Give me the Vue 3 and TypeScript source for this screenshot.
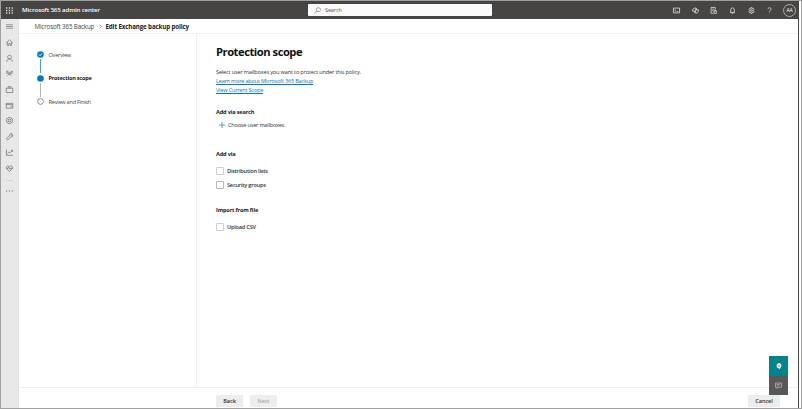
<script setup lang="ts">
interface Icon { name: string; d: string }

const headerIcons: Icon[] = [
  { name: 'Shell', d: 'M1 2.500h14v11H1zM4 6l2.500 2L4 10M8 10.500h4' },
  { name: 'Copilot', d: 'M5 2.500h4.500l1.500 4h3.500v4l-2 3H7l-2-4H1.500v-4zM9.500 3L6.500 13M5 9.500h3M9 6.500h3' },
  { name: 'Notes', d: 'M12 6V1H2.500v13.500h5M5 5h4.500M5 8h2.500M9 9h5.500v5.500H9zM10.500 9V7.500h2.500V9' },
  { name: 'Notifications', d: 'M4 11.500V6a4 4 0 0 1 8 0v5.500l1.500 1h-11zM6.500 13.500a1.500 1.500 0 0 0 3 0' },
  { name: 'Settings', d: 'M6.500 1.500h3l.5 2 2-.5 1.700 2.500-1.400 1.500v2l1.400 1.500-1.700 2.500-2-.5-.5 2h-3l-.5-2-2 .5-1.700-2.500L3.700 9V7L2.300 5.500 4 3l2 .5zM8 5.500a2.500 2.500 0 1 0 .1 0M8 7.500v1' },
  { name: 'Help', d: 'M4.500 5a3.500 3.500 0 1 1 5.500 3C8.300 9 8 9.500 8 11M8 13v1.500' },
]

const navIcons: Icon[] = [
  { name: 'Menu', d: 'M0 4h16M0 8h16M0 12h16' },
  { name: 'Home', d: 'M1 8.500L8 2l7 6.500M3 7v7.500h3.500v-4.500h3v4.500H13V7' },
  { name: 'Users', d: 'M8 .5a4.300 4.300 0 1 0 .1 0M1.500 15.500c.3-4 2.500-6.500 6.500-6.500s6.200 2.500 6.500 6.500' },
  { name: 'Teams', d: 'M3 2.500a1.500 1.500 0 1 0 .1 0M13 2.500a1.500 1.500 0 1 0 .1 0M8 5a2 2 0 1 0 .1 0M0 8.500c1-2.500 4-2.500 5.500 0M10.500 8.500c1-2.500 4-2.500 5.500 0M4 13.500c.5-5 7.500-5 8 0' },
  { name: 'Resources', d: 'M.5 5h15v10H.500zM5 5V1.500h6V5' },
  { name: 'Billing', d: 'M.5 3h15v11H.500zM.500 6h15M10.500 10.500h3' },
  { name: 'Support', d: 'M8 .800a7.200 7.200 0 1 0 .1 0M8 5a3 3 0 1 0 .1 0M3 3l3 3M10 6l3-3M3 13l3-3M10 10l3 3' },
  { name: 'Settings', d: 'M1.500 12l7.500-7c-.5-3 2-5 5-3.500l-2.500 2.500 1 1.500 3-1c.5 3.500-2 5-4.500 4.500L4 15.500c-2 0-3.500-1.500-2.500-3.500z' },
  { name: 'Reports', d: 'M1 1.500V14.500h14.500M3.500 11l4-4.500 2 2L15 3.500M11.500 3H15v3.500' },
  { name: 'Health', d: 'M8 15L1.500 8.500C-1.500 4 5-1 8 4c3-5 9.500 0 6.500 4.500zM1 7.500H5L6.500 5 9 10l1.500-2.500H15' },
]
</script>

<template>
  <div class="window">
    <div class="shell">
      <header class="top">
        <svg class="waffle" viewBox="0 0 7 7"><path d="M0 1h7M0 3.500h7M0 6h7" /></svg>
        <span class="brand">Microsoft 365 admin center</span>
        <div class="search">
          <svg viewBox="0 0 16 16"><path d="M10 1.500a4.500 4.500 0 1 0 .1 0M6.500 9L1 14.500" /></svg>
          <span>Search</span>
        </div>
        <div class="tools">
          <svg v-for="i in headerIcons" :key="i.name" viewBox="0 0 16 16"><path :d="i.d" /></svg>
        </div>
        <div class="avatar">AA</div>
      </header>
      <div class="lower">
        <nav class="side">
          <div v-for="i in navIcons" :key="i.name" class="nav-item">
            <svg viewBox="0 0 16 16"><path :d="i.d" /></svg>
          </div>
          <div class="rule"></div>
          <svg class="more" viewBox="0 0 7 2"><path d="M0 1h1.200M2.900 1h1.200M5.800 1H7" /></svg>
        </nav>
        <div class="page">
          <div class="crumbs">
            <span class="crumb">Microsoft 365 Backup</span>
            <svg viewBox="0 0 4 6"><path d="M.7.500L3.200 3 .7 5.500" /></svg>
            <b class="current">Edit Exchange backup policy</b>
          </div>
          <div class="middle">
            <aside class="steps">
              <div class="step">
                <svg viewBox="0 0 7 7"><circle cx="3.500" cy="3.500" r="3.300" class="fill" /><path class="tick" d="M1.900 3.500L3 4.700l2.200-2.300" /></svg>
                <span>Overview</span>
              </div>
              <div class="line done"></div>
              <div class="step">
                <svg viewBox="0 0 7 7"><circle cx="3.500" cy="3.500" r="3.300" class="fill" /></svg>
                <b>Protection scope</b>
              </div>
              <div class="line"></div>
              <div class="step">
                <svg viewBox="0 0 7 7"><circle cx="3.500" cy="3.500" r="2.900" class="ring" /></svg>
                <span>Review and Finish</span>
              </div>
            </aside>
            <main class="content">
              <h1>Protection scope</h1>
              <p class="intro">Select user mailboxes you want to protect under this policy.</p>
              <a class="learn">Learn more about Microsoft 365 Backup</a>
              <a class="view">View Current Scope</a>
              <h2 class="h-search">Add via search</h2>
              <div class="choose">
                <svg viewBox="0 0 7 7"><path d="M3.500 0v7M0 3.500h7" /></svg>
                <span>Choose user mailboxes</span>
              </div>
              <h2 class="h-add">Add via</h2>
              <label class="opt first"><i></i><span>Distribution lists</span></label>
              <label class="opt second"><i></i><span>Security groups</span></label>
              <h2 class="h-import">Import from file</h2>
              <label class="opt third"><i></i><span>Upload CSV</span></label>
            </main>
          </div>
          <footer>
            <button class="back">Back</button>
            <button class="next">Next</button>
            <button class="cancel">Cancel</button>
          </footer>
        </div>
      </div>
    </div>
    <div class="float">
      <div class="help">
        <svg viewBox="0 0 8 10"><path d="M2 7.500C-.8 4.500 1 .5 4 .5s5 3.500 2 6.500L4.500 9.800V7.500z" /><path class="hole" d="M4 2.300v3" /></svg>
      </div>
      <div class="feedback">
        <svg viewBox="0 0 16 16"><path d="M1 2.500h14v9.500H8l-3 3v-3H1zM4 6h8M4 8.800h5" /></svg>
      </div>
    </div>
  </div>
</template>

<style>
body { margin: 0; overflow: hidden; }
</style>

<style scoped>
* { box-sizing: border-box; }
.window {
  position: relative; width: 802px; height: 409px; padding-right: 2px;
  border: 1px solid #a0a0a0; background: #fff; color: #333;
  font: 5.600px/8px "Open Sans", "Noto Sans", sans-serif; letter-spacing: -.17px; white-space: nowrap;
}
.shell { height: 407px; border-right: 1px solid #484644; display: flex; flex-direction: column; }
svg { display: block; flex: none; fill: none; stroke: currentColor; overflow: visible; }
.top { height: 18px; flex: none; background: #464543; color: #fff; display: flex; align-items: center; }
.waffle { width: 7px; height: 7px; margin-left: 5px; stroke-width: 1.300; stroke-dasharray: 1.300 1.500; color: #ddd; }
.brand { margin-left: 9px; width: 285.500px; font-size: 6.100px; font-weight: 600; letter-spacing: -.11px; }
.search { width: 184px; height: 12px; border-radius: 1px; background: #fafafa; color: #555; display: flex; align-items: center; padding-left: 6.500px; }
.search svg { width: 7px; height: 7px; stroke-width: 1.400; margin-right: 4px; }
.tools { display: flex; gap: 11.700px; margin-left: 181.500px; color: #e0e0e0; }
.tools svg { width: 7px; height: 7px; stroke-width: 1.800; }
.avatar { width: 13px; height: 13px; margin-left: 9.500px; border: 1px solid #aaa; border-radius: 50%; font-size: 5px; line-height: 11px; letter-spacing: -.1px; text-align: center; }
.lower { flex: 1; min-height: 0; display: flex; }
.side { width: 18px; flex: none; background: #e8e8e8; color: #6a6a6a; display: flex; flex-direction: column; align-items: center; border-right: 1px solid #e2e2e2; }
.nav-item { height: 15.700px; width: 17px; display: flex; align-items: center; justify-content: center; }
.nav-item svg { width: 7px; height: 7px; stroke-width: 1.600; }
.nav-item:first-child svg { stroke-width: 1.500; }
.rule { height: 1px; width: 6px; margin-top: 4px; background: #d0d0d0; }
.more { width: 7px; height: 2px; margin-top: 9px; stroke-width: 1; }
.page { flex: 1; min-width: 0; display: flex; flex-direction: column; }
.crumbs { height: 15px; flex: none; display: flex; align-items: center; padding: 1px 0 0 15.500px; border-bottom: 1px solid #f1f1f1; font-size: 6.200px; letter-spacing: -.13px; color: #444; }
.crumbs svg { width: 3px; height: 5px; stroke-width: .8; margin: 0 4px; }
.current { font-weight: 700; color: #222; }
.crumb { width: 60px; }
.middle { flex: 1; min-height: 0; display: flex; }
.steps { width: 178px; padding: 17px 0 0 18px; border-right: 1px solid #f0f0f0; }
.step { height: 7px; display: flex; align-items: center; gap: 4.500px; color: #444; letter-spacing: -.23px; }
.step b { color: #222; }
.step svg { width: 7px; height: 7px; }
.fill { fill: #0078d4; stroke: none; }
.tick { stroke: #fff; stroke-width: .9; }
.ring { stroke: #777; stroke-width: .8; }
.line { width: 1px; height: 14px; margin: 1px 0 1.500px 3px; background: #b5b5b5; }
.line.done { background: #4a9fe0; }
.content { display: flex; flex-direction: column; align-items: flex-start; padding: 10px 0 0 19px; }
h1, h2, p { margin: 0; }
h1 { height: 15px; font-size: 11.200px; line-height: 15px; font-weight: 700; letter-spacing: -.47px; color: #111; }
.intro { margin-top: 9px; height: 9px; line-height: 9px; }
a { height: 9px; line-height: 9px; color: #0078d4; letter-spacing: -.21px; text-decoration: underline; text-decoration-thickness: .5px; text-underline-offset: .5px; }
h2 { font-size: 5.600px; line-height: 8px; height: 8px; font-weight: 700; color: #222; }
.h-search { margin-top: 13px; }
.choose { display: flex; align-items: center; margin: 5px 0 0 3px; height: 8px; gap: 3px; letter-spacing: -.21px; }
.choose svg { width: 6px; height: 6px; color: #2086d7; stroke-width: .9; }
.h-add { margin-top: 21px; }
.opt { display: flex; align-items: center; height: 8px; gap: 3px; font-weight: 600; color: #333; letter-spacing: -.21px; }
.opt i { width: 8px; height: 8px; border: 1px solid #cecece; border-radius: 1px; }
.second i { border-color: #b8b8b8; }
.first { margin-top: 9px; }
.second { margin-top: 6px; }
.h-import { margin-top: 17px; }
.third { margin-top: 9px; }
footer { height: 21px; flex: none; display: flex; align-items: flex-start; padding: 7px 18px 0 197px; border-top: 1px solid #eee; }
button { width: 27px; height: 12px; margin: 0; padding: 0; border: 0; background: #ededed; color: #333; font: 600 5.600px/12px "Open Sans", sans-serif; letter-spacing: -.1px; text-align: center; }
.next { margin-left: 7px; color: #999; font-weight: 400; }
.cancel { margin-left: auto; width: 32px; }
.float { position: absolute; left: 768px; top: 355px; width: 19px; }
.help, .feedback { height: 19px; display: flex; align-items: center; justify-content: center; color: #fff; }
.help { background: #03838b; height: 20px; }
.feedback { background: #5a5856; color: #c8c8c8; }
.help svg { width: 6px; height: 7px; fill: #fff; stroke: none; }
.help .hole { stroke: #03838b; stroke-width: 1.200; }
.feedback svg { width: 7px; height: 7px; stroke-width: 1.500; }
</style>
